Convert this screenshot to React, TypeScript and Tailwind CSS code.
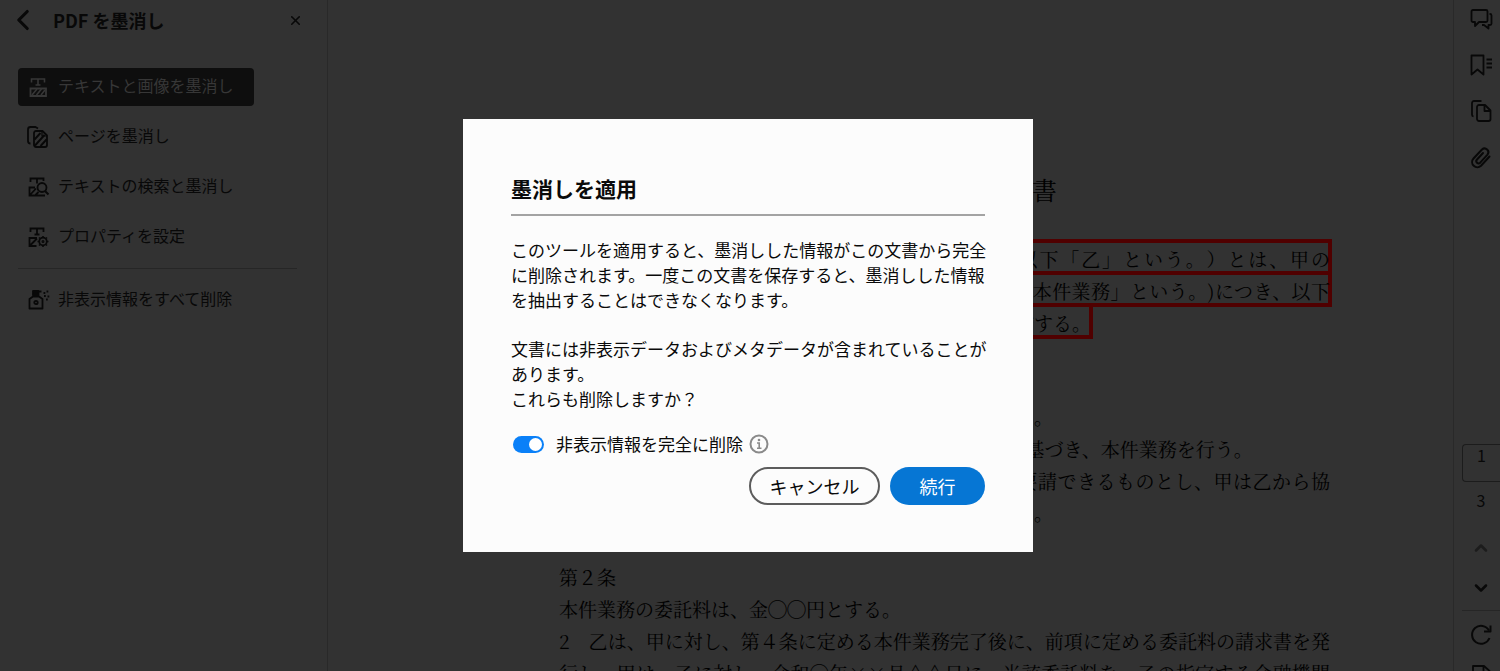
import { useState } from 'react';
import type { ReactNode } from 'react';
import { ChevronDown, ChevronLeft, ChevronUp, X } from 'lucide-react';

function Icon({ children }: { children: ReactNode }) {
    return (
        <svg
            width="24"
            height="24"
            viewBox="0 0 24 24"
            fill="none"
            stroke="currentColor"
            strokeWidth="1.8"
            strokeLinejoin="round"
            aria-hidden="true"
            className="shrink-0"
        >
            {children}
        </svg>
    );
}

const RedactTextIcon = () => (
    <Icon>
        <path d="M5.500 7.500V4h13v3.500M12 4v6M9.500 10h5" strokeLinejoin="miter" strokeWidth="1.600" />
        <path d="M4.500 13.500h15.500v7.500H4.500z" strokeLinejoin="miter" />
        <path d="M6 20l5-6M10.500 20l5-6M15 20l4-5" strokeWidth="1.600" />
    </Icon>
);

const RedactPageIcon = () => (
    <Icon>
        <path d="M4.500 18.500a2.500 2.500 0 0 1-2.500-2.500V4.500A2.500 2.500 0 0 1 4.500 2H9.500l2.500 1.500" />
        <path d="M10 6h6.500L21 10.500V20a2 2 0 0 1-2 2h-9a2 2 0 0 1-2-2V8a2 2 0 0 1 2-2z" />
        <path d="M8.500 14.500L14.500 8M9 20.500L18.500 10M14.500 21L20.500 14.500" strokeWidth="1.900" />
        <path d="M16 6v5h5" strokeWidth="1.200" />
    </Icon>
);

const RedactSearchIcon = () => (
    <Icon>
        <path d="M4.500 7V3.500h13V6M11 3.500v5" strokeLinejoin="miter" />
        <path d="M9 12.500H3.500V20.500H19M4 20l6-6.500M9.500 20l3-3" strokeLinejoin="miter" />
        <circle cx="16" cy="12.500" r="4.500" />
        <path d="M19 16l3.500 3.500" strokeWidth="2" />
    </Icon>
);

const RedactSettingsIcon = () => (
    <Icon>
        <path d="M4.500 7V3.500h13V7M11 3.500v6M8.500 9.500h5" strokeLinejoin="miter" />
        <path d="M11 13H3.500v8H10.500M4 20.500l7-7" strokeLinejoin="miter" />
        <circle cx="17" cy="16.500" r="3.800" />
        <path
            d="M17 11v1.500M17 20.500V22M11.500 16.500H13M21 16.500h1.500M13 12.500l1 1M20 19.500l1 1M21 12.500l-1 1M14 19.500l-1 1"
            strokeWidth="1.600"
        />
        <circle cx="17" cy="16.500" r="0.600" />
    </Icon>
);

const SanitizeIcon = () => (
    <Icon>
        <path d="M7 3h5.500v4H7zM12 3.500h3.500" fill="currentColor" />
        <path d="M7 8.500L3.500 11v9.500h13V11L13 8.500z" />
        <circle cx="10" cy="14.500" r="1.700" />
        <path d="M17.500 5h1.800M20.500 3.500h1.800M18 8h1.800M21.500 8.500h1.800M20 11.500h1.800" strokeWidth="1.800" />
    </Icon>
);

const CommentsIcon = () => (
    <Icon>
        <path d="M4 3h13a1.500 1.500 0 0 1 1.500 1.500v9A1.500 1.500 0 0 1 17 15H10l-4 4v-4H4a1.500 1.500 0 0 1-1.500-1.500v-9A1.500 1.500 0 0 1 4 3z" />
        <path d="M20.500 7h.5a1.500 1.500 0 0 1 1.500 1.500v8A1.500 1.500 0 0 1 21 18h-1.500v3.500L15 18h-2" />
    </Icon>
);

const BookmarkIcon = () => (
    <Icon>
        <path d="M2.500 2.500h12v19l-6-5-6 5z" />
        <path d="M17.500 6.500H23M17.500 10.500H23M17.500 14.500H23" />
    </Icon>
);

const PagesIcon = () => (
    <Icon>
        <path d="M4.500 17.500A2 2 0 0 1 3 15.500V4a2 2 0 0 1 2-2h7.500" />
        <path d="M10 6h6l5.500 5.500V20a2 2 0 0 1-2 2H10a2 2 0 0 1-2-2V8a2 2 0 0 1 2-2z" />
        <path d="M15.500 6v6h6" />
    </Icon>
);

const AttachmentIcon = () => (
    <Icon>
        <path
            d="M14 7L8 13.500a2.200 2.200 0 0 0 3.200 3.200l7.300-8a3.800 3.800 0 0 0-5.500-5.200L4.500 12.500a5.200 5.200 0 0 0 7.500 7.200L20.500 10.500"
            transform="translate(0 1)"
            strokeLinecap="round"
            strokeWidth="2"
        />
    </Icon>
);

const RotateIcon = () => (
    <Icon>
        <path d="M20.500 15A9 9 0 1 1 20 7.500" strokeWidth="2" />
        <path d="M21.500 2.500v6H15" strokeWidth="2" />
    </Icon>
);

const SavePageIcon = () => (
    <Icon>
        <path d="M4 3h11l5.500 5v13H4z" />
        <path d="M14.500 3v6h6" />
    </Icon>
);

const tools = [
    { label: 'テキストと画像を墨消し', icon: RedactTextIcon },
    { label: 'ページを墨消し', icon: RedactPageIcon },
    { label: 'テキストの検索と墨消し', icon: RedactSearchIcon },
    { label: 'プロパティを設定', icon: RedactSettingsIcon },
];

const panels = [
    { label: 'コメント', icon: CommentsIcon },
    { label: 'しおり', icon: BookmarkIcon },
    { label: 'ページ', icon: PagesIcon },
    { label: '添付ファイル', icon: AttachmentIcon },
];

function Sidebar() {
    return (
        <aside className="w-[328px] shrink-0 border-r border-[#292929]">
            <header className="flex h-10 items-center pr-6 pl-[6px]">
                <button type="button" aria-label="戻る" className="mr-[13px]">
                    <ChevronLeft size={34} strokeWidth={2.2} />
                </button>
                <h1 className="flex-1 text-[18px] font-bold">PDF を墨消し</h1>
                <button type="button" aria-label="閉じる">
                    <X size={15} strokeWidth={2.5} />
                </button>
            </header>
            <nav className="mt-7 mr-[30px] ml-[18px]">
                <ul className="flex flex-col gap-3 border-b border-[#262626] pb-3">
                    {tools.map(({ label, icon: ToolIcon }, i) => (
                        <li key={label}>
                            <button
                                type="button"
                                className={`flex h-[38px] w-[236px] items-center gap-2 rounded px-2 text-[16px] whitespace-nowrap ${
                                    i === 0 ? 'bg-[#0e0e0e] text-[#373737]' : ''
                                }`}
                            >
                                <ToolIcon />
                                <span className="pb-1">{label}</span>
                            </button>
                        </li>
                    ))}
                </ul>
                <button type="button" className="mt-3 flex h-[38px] items-center gap-2 px-2 text-[16px]">
                    <SanitizeIcon />
                    <span className="pb-1">非表示情報をすべて削除</span>
                </button>
            </nav>
        </aside>
    );
}

function Contract() {
    return (
        <main className="flex-1 overflow-hidden pl-[108px]">
            <article className="mx-auto w-[771px] pt-[169px] font-['Noto_Serif_CJK_JP','Noto_Sans_CJK_JP',serif] text-[19px] leading-8 whitespace-nowrap text-black [text-spacing-trim:space-all]">
                <h2 className="mb-[30px] text-center text-[25px] leading-10">業務委託基本契約書</h2>
                <div className="-mx-0.5 border-4 border-[#500000] pt-1 [text-align-last:justify]">
                    <p className="-mx-0.5 leading-6">　○○（以下「甲」という。）と株式会社△△（以下「乙」という。）とは、甲の</p>
                </div>
                <div className="-mx-0.5 border-4 border-t-0 border-[#500000] pt-1 [text-align-last:justify]">
                    <p className="-mx-0.5 leading-6">
                        各業務に関する事務の一切を乙に委託すること(以下「本件業務」という。)につき、以下
                    </p>
                </div>
                <div className="-ml-0.5 w-fit border-4 border-t-0 border-[#500000] pt-1">
                    <p className="-mx-0.5 leading-6">のとおり業務委託契約（以下「契約」という。）を締結する。</p>
                </div>
                <p className="mt-[30px]">第１条</p>
                <p>甲は、乙に対し、本業務を委託し、乙はこれを受託する。</p>
                <p>2　乙は、指示及び本契約に定める仕様その他の条件に基づき、本件業務を行う。</p>
                <p className="[text-align-last:justify]">
                    3　乙は、甲に対し、本件業務の遂行に必要な協力を要請できるものとし、甲は乙から協
                </p>
                <p>力の要請を受けた場合は、必ずこれに応じるものとする。</p>
                <p className="mt-8">第２条</p>
                <p>本件業務の委託料は、金◯◯円とする。</p>
                <p className="[text-align-last:justify]">
                    2　乙は、甲に対し、第４条に定める本件業務完了後に、前項に定める委託料の請求書を発
                </p>
                <p className="[text-align-last:justify]">
                    行し、甲は、乙に対し、令和◯年××月△△日に、当該委託料を、乙の指定する金融機関
                </p>
            </article>
        </main>
    );
}

function PanelRail() {
    return (
        <aside className="flex w-[47px] shrink-0 flex-col justify-between border-l border-[#292929]">
            <ul className="flex flex-col gap-[22px] pt-[7px] pl-[15px]">
                {panels.map(({ label, icon: PanelIcon }) => (
                    <li key={label}>
                        <button type="button" aria-label={label} className="block">
                            <PanelIcon />
                        </button>
                    </li>
                ))}
            </ul>
            <div className="-mb-4 flex flex-col items-center pl-2">
                <input
                    aria-label="ページ番号"
                    defaultValue="1"
                    className="h-[38px] w-full rounded-l border border-r-0 border-[#1c1c1c] pb-4 text-center text-[16px]"
                />
                <p className="mt-1 text-[16px] leading-7">3</p>
                <button type="button" aria-label="前のページ" className="mt-6 text-[#1c1c1c]">
                    <ChevronUp size={20} strokeWidth={3} />
                </button>
                <button type="button" aria-label="次のページ" className="mt-5">
                    <ChevronDown size={20} strokeWidth={3} />
                </button>
                <hr className="mt-3 w-full border-[#262626]" />
                <button type="button" aria-label="回転" className="mt-3">
                    <RotateIcon />
                </button>
                <button type="button" aria-label="ページを保存" className="mt-4">
                    <SavePageIcon />
                </button>
            </div>
        </aside>
    );
}

function ApplyDialog() {
    const [sanitize, setSanitize] = useState(true);

    return (
        <div
            role="dialog"
            aria-modal="true"
            aria-labelledby="dialog-title"
            className="w-[570px] bg-[#fcfcfc] px-12 pt-[53px] pb-[47px] text-[#0a0a0a]"
        >
            <h2 id="dialog-title" className="border-b-2 border-[#a3a3a3] pb-[10px] text-[21px] leading-8 font-bold">
                墨消しを適用
            </h2>
            <div className="-mr-1 mt-[21px] text-[17px] leading-[25px] [text-spacing-trim:space-all]">
                <p>
                    このツールを適用すると、墨消しした情報がこの文書から完全に削除されます。一度この文書を保存すると、墨消しした情報を抽出することはできなくなります。
                </p>
                <p className="mt-6">
                    文書には非表示データおよびメタデータが含まれていることがあります。
                    <br />
                    これらも削除しますか？
                </p>
            </div>
            <div className="mt-[21px] flex items-center">
                <label className="flex cursor-pointer items-center gap-3 pl-0.5 text-[17px] leading-6">
                    <input
                        type="checkbox"
                        role="switch"
                        checked={sanitize}
                        onChange={(e) => setSanitize(e.target.checked)}
                        className="flex h-[17px] w-[31px] appearance-none items-center rounded-full bg-[#9a9a9a] px-0.5 before:size-[13px] before:rounded-full before:bg-white checked:justify-end checked:bg-[#0a80f8]"
                    />
                    非表示情報を完全に削除
                </label>
                <button type="button" aria-label="詳細情報" className="ml-[6px] text-[#8a8a8a]">
                    <svg width="20" height="20" viewBox="0 0 20 20" fill="none" stroke="currentColor" strokeWidth="2">
                        <circle cx="10" cy="10" r="8.5" />
                        <path d="M8 9h2.200v5M8 14.200h4.500" strokeWidth="1.600" />
                        <circle cx="10" cy="6" r="1.300" fill="currentColor" stroke="none" />
                    </svg>
                </button>
            </div>
            <div className="mt-[11px] flex justify-end gap-[10px]">
                <button
                    type="button"
                    className="h-[38px] w-[131px] rounded-full border-2 border-[#5c5c5c] text-[18px]"
                >
                    キャンセル
                </button>
                <button type="button" className="h-[38px] w-[95px] rounded-full bg-[#0676d4] text-[18px] text-white">
                    続行
                </button>
            </div>
        </div>
    );
}

export default function App() {
    return (
        <div
            lang="ja"
            className="flex h-screen overflow-hidden bg-[#323232] font-['Noto_Sans_CJK_JP',sans-serif] text-[#080808]"
        >
            <Sidebar />
            <Contract />
            <PanelRail />
            <div className="fixed inset-0 flex items-center justify-center pr-1">
                <ApplyDialog />
            </div>
        </div>
    );
}
